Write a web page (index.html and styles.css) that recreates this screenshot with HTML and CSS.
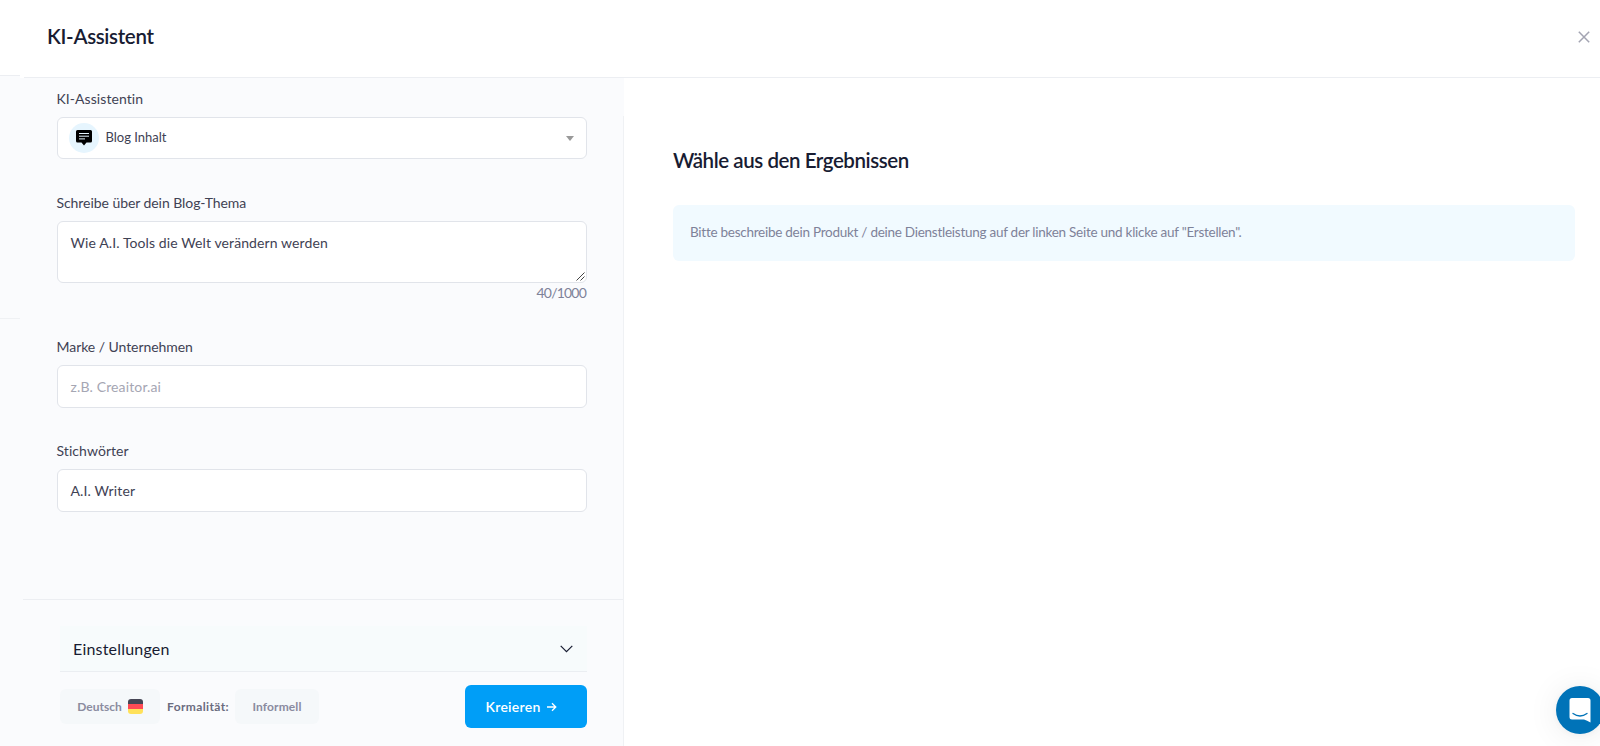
FILE: index.html
```html
<!DOCTYPE html>
<html lang="de">
<head>
<meta charset="utf-8">
<title>KI-Assistent</title>
<link rel="stylesheet" href="styles.css">
</head>
<body>
<div class="app">
  <aside class="gutter">
    <div class="gutter-top"></div>
    <div class="gutter-mid"></div>
  </aside>
  <div class="drawer">
    <header class="header">
      <h1 class="title">KI-Assistent</h1>
      <svg class="close" width="12" height="12" viewBox="0 0 12 12"><path d="M.8.8l10.4 10.4M11.2.8L.8 11.2" fill="none" stroke="#a3a4b2" stroke-width="1.5"/></svg>
    </header>
    <div class="body">
      <section class="panel">
        <div class="form">
          <div class="field">
            <span class="label assistant">KI-Assistentin</span>
            <div class="control select">
              <span class="avatar"><svg width="16" height="16" viewBox="0 0 16 16"><path d="M1.500 0h13Q16 0 16 1.500v9.500q0 1.500-1.500 1.500h-4L8 15.500 5.500 12.500h-4Q0 12.500 0 11V1.500Q0 0 1.500 0z" fill="#000"/><path d="M3 3.500h10M3 6.200h10M3 8.900h6" stroke="#e6f5fe" stroke-width="1"/></svg></span>
              <span class="select-text">Blog Inhalt</span>
              <span class="caret"></span>
            </div>
          </div>
          <div class="field">
            <span class="label">Schreibe über dein Blog-Thema</span>
            <div class="control area"><span class="area-text">Wie A.I. Tools die Welt verändern werden</span><svg class="grip" width="9" height="9" viewBox="0 0 9 9"><path d="M.5 8.500l8-8M4.500 8.500l4-4" stroke="#444" stroke-width="1" fill="none"/></svg></div>
            <span class="counter">40/1000</span>
          </div>
          <div class="field">
            <span class="label">Marke / Unternehmen</span>
            <div class="control input"><span class="placeholder">z.B. Creaitor.ai</span></div>
          </div>
          <div class="field">
            <span class="label keywords">Stichwörter</span>
            <div class="control input"><span class="value">A.I. Writer</span></div>
          </div>
        </div>
        <footer class="footer">
          <div class="settings">
            <span class="settings-text">Einstellungen</span>
            <svg width="13" height="8" viewBox="0 0 13 8"><path d="M.7.900l5.800 5.800L12.300.900" fill="none" stroke="#181c32" stroke-width="1.200"/></svg>
          </div>
          <div class="actions">
            <div class="pill language"><span>Deutsch</span><svg width="15" height="15" viewBox="0 0 15 15"><path d="M0 5V3Q0 0 3 0h9q3 0 3 3v2z" fill="#464655"/><path d="M0 5h15v5H0z" fill="#ff4b55"/><path d="M0 10h15v2q0 3-3 3H3q-3 0-3-3z" fill="#ffe15a"/></svg></div>
            <span class="formality">Formalität:</span>
            <div class="pill informal"><span>Informell</span></div>
            <div class="button"><span>Kreieren</span><svg width="10" height="10" viewBox="0 0 10 10"><path d="M0 5h8.500M5 1.200L8.800 5 5 8.800" fill="none" stroke="#fff" stroke-width="1.300"/></svg></div>
          </div>
        </footer>
      </section>
      <main class="results">
        <h2 class="results-title">Wähle aus den Ergebnissen</h2>
        <div class="info"><span>Bitte beschreibe dein Produkt / deine Dienstleistung auf der linken Seite und klicke auf "Erstellen".</span></div>
      </main>
    </div>
  </div>
  <div class="chat"><svg width="22" height="25" viewBox="0 0 22 25"><path d="M3 0h16q2.500 0 2.500 2.500V24.500Q18 22.500 15 21.500H3Q.5 21.500.5 19V2.500Q.5 0 3 0z" fill="#fff"/><path d="M4 15.500q7 5 14 0" fill="none" stroke="#0073b8" stroke-width="1.300" stroke-linecap="round"/></svg></div>
</div>
</body>
</html>
```

FILE: styles.css
```css
* { box-sizing: border-box; }
body { margin: 0; font-family: Lato, sans-serif; font-variant-ligatures: none; color: #3f4254; background: #fff; }
svg { display: block; flex: none; }
span { white-space: nowrap; }
.app { position: relative; display: flex; width: 1600px; height: 746px; overflow: hidden; }
.gutter { width: 20px; background: #fafbfd; }
.gutter-top { height: 76px; background: #fff; border-bottom: 1px solid #eceef2; }
.gutter-mid { height: 243px; border-bottom: 1px solid #eff1f4; }
.drawer { flex: 1; display: flex; flex-direction: column; }
.header { height: 78px; margin-left: 4px; padding: 0 10px 5px 23px; display: flex; align-items: center; justify-content: space-between; border-bottom: 1px solid #eceef2; }
.title { margin: 0; font-size: 20.5px; line-height: 24px; font-weight: 600; letter-spacing: -.33px; color: #181c32; }
.close { margin-top: 2px; }
.body { flex: 1; display: flex; }
.panel { width: 604px; display: flex; flex-direction: column; background: #fafbfd; border: 0 solid; border-right-width: 1px; border-image: linear-gradient(#fafbfd 39px, #eff1f4 39px) 1; }
.form { height: 521px; padding: 11px 36px 0 37px; display: flex; flex-direction: column; }
.field { height: 104px; display: flex; flex-direction: column; }
.field:nth-child(2) { height: 144px; }
.label { height: 28px; margin-left: -.5px; font-size: 14px; line-height: 20px; letter-spacing: -.06px; }
.assistant, .keywords { letter-spacing: .06px; }
.control { width: 530px; background: #fff; border: 1px solid #e1e4ea; border-radius: 6px; display: flex; align-items: center; font-size: 14px; }
.select { height: 42px; padding: 0 12px 0 11px; font-size: 13px; }
.select-text { padding-bottom: 2px; }
.avatar { width: 30px; height: 30px; margin-right: 6.5px; border-radius: 50%; background: #e6f5fe; display: flex; align-items: center; justify-content: center; }
.caret { margin-left: auto; border: 4px solid transparent; border-top: 5px solid #999; border-bottom: 0; }
.area { height: 62px; padding: 11px 1px 1px 12.5px; align-items: flex-start; justify-content: space-between; }
.area-text { line-height: 20px; letter-spacing: .1px; }
.grip { align-self: flex-end; }
.counter { align-self: flex-end; padding-right: 1px; font-size: 14px; line-height: 20px; letter-spacing: -.8px; color: #7e8299; }
.input { height: 43px; padding-left: 12.5px; letter-spacing: .13px; }
.placeholder { color: #a5a6b3; }
.footer { flex: 1; border-top: 1px solid #eceef2; margin-left: 3px; padding: 26px 36px 0 37px; }
.settings { height: 46px; padding: 0 14px 0 13px; background: #f7fbfc; border-bottom: 1px solid #ebeef2; display: flex; align-items: center; justify-content: space-between; font-size: 16px; letter-spacing: .2px; color: #181c32; }
.actions { margin-top: 13px; display: flex; align-items: center; font-size: 12px; font-weight: 700; }
.pill { height: 35px; border-radius: 6px; background: #f5f8fa; color: #8a8b9f; display: flex; align-items: center; justify-content: center; gap: 6px; }
.language { width: 100px; }
.informal { width: 84px; letter-spacing: .1px; }
.formality { width: 75px; padding-left: 7px; letter-spacing: .38px; color: #6b6c7f; }
.button { width: 122px; height: 43px; margin-left: auto; padding-left: 20.5px; border-radius: 6px; background: #009ef7; color: #fff; display: flex; align-items: center; gap: 6px; font-size: 14px; font-weight: 600; letter-spacing: .27px; }
.results { flex: 1; padding: 70px 25px 0 49px; }
.results-title { margin: 0 0 33px; font-size: 20.5px; line-height: 24px; font-weight: 600; letter-spacing: -.44px; color: #181c32; }
.info { height: 56px; padding: 0 0 2px 17px; border-radius: 6px; background: #f1faff; display: flex; align-items: center; font-size: 13.5px; letter-spacing: -.26px; color: #7e8299; }
.chat { position: absolute; left: 1556px; top: 686px; width: 48px; height: 48px; border-radius: 50%; background: #0073b8; padding: 12px 0 0 13px; box-shadow: 0 1px 6px rgba(0,0,0,.04), 0 2px 32px rgba(0,0,0,.08); }
```
